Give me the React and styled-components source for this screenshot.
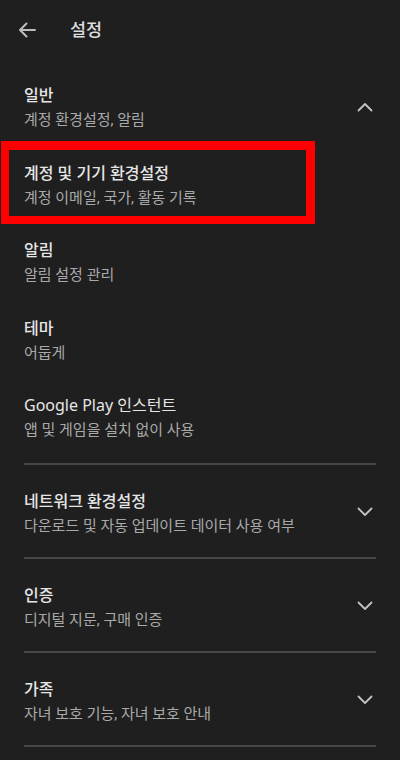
import React from "react";
import styled, { createGlobalStyle } from "styled-components";

const GlobalStyle = createGlobalStyle`
  html, body {
    margin: 0;
    padding: 0;
    background: #1f1f1f;
  }
  body {
    font-family: Roboto, "Noto Sans CJK KR", sans-serif;
    -webkit-font-smoothing: antialiased;
  }
  * {
    box-sizing: border-box;
  }
`;

const general = [
  { title: "계정 및 기기 환경설정", sub: "계정 이메일, 국가, 활동 기록", marked: true },
  { title: "알림", sub: "알림 설정 관리" },
  { title: "테마", sub: "어둡게" },
  { title: "Google Play 인스턴트", sub: "앱 및 게임을 설치 없이 사용", light: true },
];

const sections = [
  { title: "네트워크 환경설정", sub: "다운로드 및 자동 업데이트 데이터 사용 여부" },
  { title: "인증", sub: "디지털 지문, 구매 인증" },
  { title: "가족", sub: "자녀 보호 기능, 자녀 보호 안내" },
];

const BackArrow = () => (
  <svg width="20" height="20" viewBox="0 0 20 20" fill="none">
    <path
      d="M18 10H3M9.5 3.5L3 10l6.5 6.5"
      stroke="#bdbdbd"
      strokeWidth="2"
      strokeLinecap="round"
      strokeLinejoin="round"
    />
  </svg>
);

const Chevron = ({ up }) => (
  <svg width="16" height="10" viewBox="0 0 16 10" fill="none">
    <path
      d={up ? "M1.5 8.5L8 2l6.5 6.5" : "M1.5 1.5L8 8l6.5-6.5"}
      stroke="#c2c2c2"
      strokeWidth="1.8"
      strokeLinecap="round"
      strokeLinejoin="round"
    />
  </svg>
);

const App = () => {
  return (
    <Page>
      <GlobalStyle />
      <Header>
        <BackButton>
          <BackArrow />
        </BackButton>
        <HeaderTitle>설정</HeaderTitle>
      </Header>

      <Group>
        <Row>
          <Texts>
            <Title>일반</Title>
            <Sub>계정 환경설정, 알림</Sub>
          </Texts>
          <Toggle>
            <Chevron up />
          </Toggle>
        </Row>
        {general.map((item) => (
          <Row key={item.title}>
            {item.marked && <Highlight />}
            <Texts>
              <Title $light={item.light}>{item.title}</Title>
              <Sub>{item.sub}</Sub>
            </Texts>
          </Row>
        ))}
      </Group>

      {sections.map((item) => (
        <Section key={item.title}>
          <Row $section>
            <Texts>
              <Title>{item.title}</Title>
              <Sub>{item.sub}</Sub>
            </Texts>
            <Toggle>
              <Chevron />
            </Toggle>
          </Row>
        </Section>
      ))}
      <Divider />
    </Page>
  );
};

const Page = styled.div`
  width: 400px;
  min-height: 760px;
  background: #1f1f1f;
`;

const Header = styled.div`
  height: 60px;
  display: flex;
  align-items: center;
  padding-left: 17px;
`;

const BackButton = styled.div`
  width: 20px;
  height: 20px;
  display: flex;
  align-items: center;
  justify-content: center;
  margin-right: 33px;
`;

const HeaderTitle = styled.h1`
  margin: 0;
  font-size: 17.5px;
  font-weight: 500;
  color: #dedede;
  line-height: 24px;
`;

const Group = styled.div`
  padding-top: 7px;
  padding-bottom: 8px;
`;

const Row = styled.div`
  position: relative;
  display: flex;
  align-items: center;
  padding: ${(p) => (p.$section ? "24px 27px 21px 24px" : "16px 27px 14.5px 24px")};
`;

const Texts = styled.div`
  flex: 1;
  display: flex;
  flex-direction: column;
`;

const Title = styled.div`
  font-family: "Noto Sans", "Noto Sans CJK KR", sans-serif;
  font-size: 16px;
  line-height: 24px;
  font-weight: ${(p) => (p.$light ? 400 : 500)};
  color: #e6e6e6;
`;

const Sub = styled.div`
  margin-top: 3px;
  font-size: 15px;
  line-height: 20px;
  color: #a9a9a9;
`;

const Toggle = styled.div`
  width: 16px;
  height: 16px;
  display: flex;
  align-items: center;
  justify-content: center;
`;

const Highlight = styled.span`
  position: absolute;
  left: 1px;
  top: -4px;
  width: 314px;
  height: 83px;
  border: 8px solid #ff0000;
  border-top-width: 9px;
  border-right-width: 9px;
  pointer-events: none;
`;

const Section = styled.div`
  border-top: 2px solid #474747;
  margin: 0 24px;

  ${Row} {
    margin: 0 -24px;
  }
`;

const Divider = styled.div`
  height: 2px;
  margin: 0 24px;
  background: #474747;
`;

export default App;
